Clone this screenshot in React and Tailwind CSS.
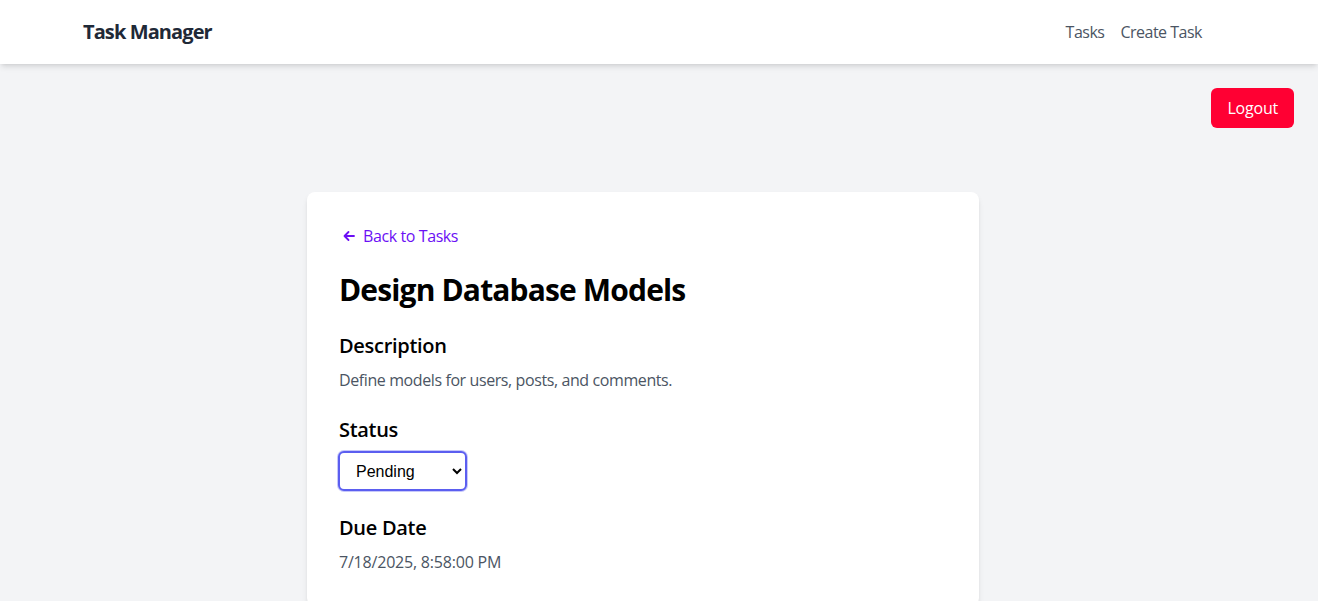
import React from "react";

export default function App() {
  return (
    <div className="min-h-screen bg-[#f3f4f6]" style={{ fontFamily: '"Open Sans", "Noto Sans", sans-serif' }}>
      <nav className="h-16 bg-white shadow-md flex items-center justify-between pl-[83px] pr-[116px]">
        <span className="text-xl font-bold text-[#1f2937] tracking-[-0.9px]">Task Manager</span>
        <div className="flex gap-4 text-[#4b5563] text-base tracking-[-0.5px]">
          <a>Tasks</a>
          <a>Create Task</a>
        </div>
      </nav>
      <div className="flex justify-end pr-6 pt-6">
        <button className="bg-[#ff0033] text-white rounded-md px-4 h-10 text-base tracking-[-0.2px]">Logout</button>
      </div>
      <div className="ml-[307px] mt-16 w-[672px] bg-white rounded-lg shadow-md p-8">
        <a className="flex items-center gap-2 text-[#6b0ff5] text-base leading-6 tracking-[-0.4px]">
          <svg width="12" height="12" viewBox="0 0 12 12" fill="none" stroke="currentColor" strokeWidth="1.8" strokeLinecap="round" strokeLinejoin="round" className="ml-1">
            <path d="M11 6H1.5M5.5 2L1.5 6l4 4" />
          </svg>
          Back to Tasks
        </a>
        <h1 className="mt-6 text-3xl leading-9 font-bold text-black tracking-[-0.85px]">Design Database Models</h1>
        <h2 className="mt-6 text-xl leading-7 font-semibold text-black tracking-[-0.3px]">Description</h2>
        <p className="mt-2 text-base leading-6 text-[#4b5563] tracking-[-0.4px]">Define models for users, posts, and comments.</p>
        <h2 className="mt-6 text-xl leading-7 font-semibold text-black tracking-[-0.3px]">Status</h2>
        <div className="mt-[7px] -ml-px">
          <select
            className="w-[129px] h-10 border-2 border-[#5b5ef0] rounded-md pl-3 pr-1 text-base text-black bg-white ring-1 ring-[#c7c8fa]"
            style={{ fontFamily: '"Liberation Sans", Arial, sans-serif' }}
            defaultValue="Pending"
          >
            <option>Pending</option>
            <option>In Progress</option>
            <option>Completed</option>
          </select>
        </div>
        <h2 className="mt-[23px] text-xl leading-7 font-semibold text-black tracking-[-0.3px]">Due Date</h2>
        <p className="mt-2 text-base leading-6 text-[#4b5563] tracking-[-0.2px]">7/18/2025, 8:58:00 PM</p>
      </div>
    </div>
  );
}
